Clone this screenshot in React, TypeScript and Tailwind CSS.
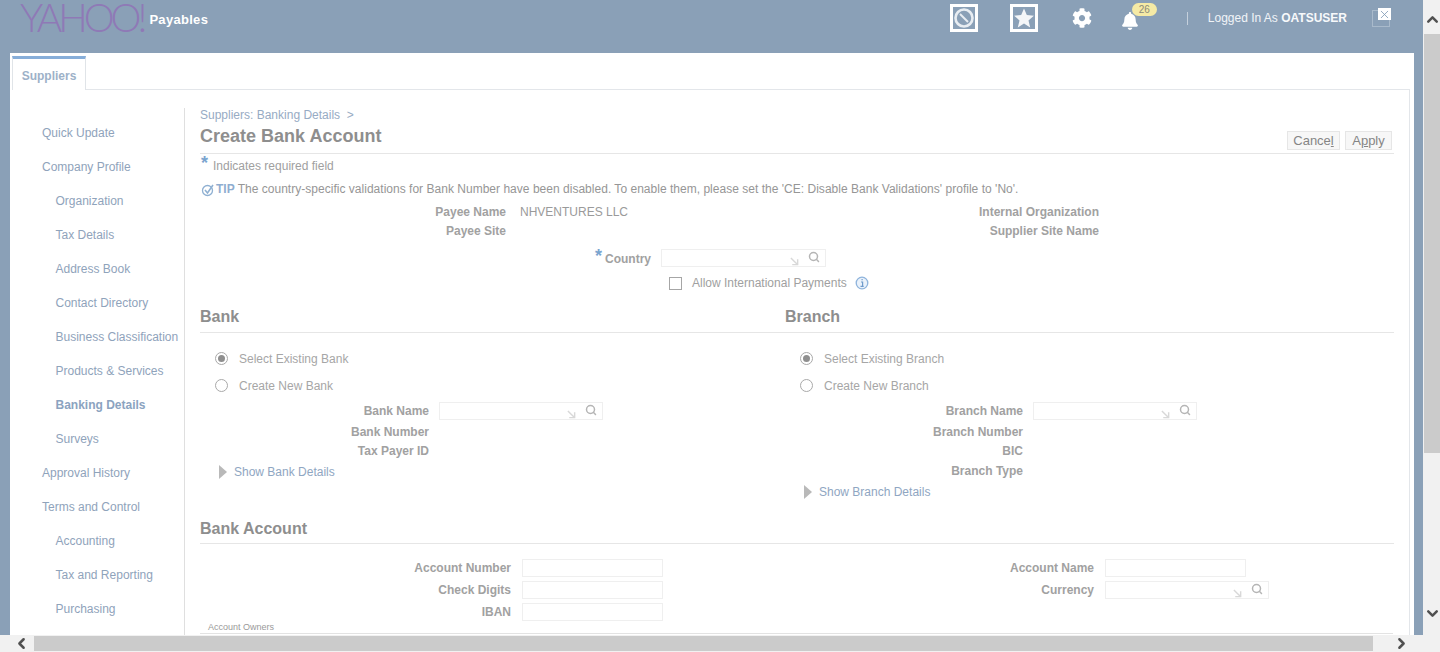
import React from 'react';
import { FaBell, FaCog } from 'react-icons/fa';
import { ChevronDown, ChevronLeft, ChevronRight, ChevronUp, Search, X } from 'lucide-react';

const navItems = [
  { label: 'Quick Update', sub: false },
  { label: 'Company Profile', sub: false },
  { label: 'Organization', sub: true },
  { label: 'Tax Details', sub: true },
  { label: 'Address Book', sub: true },
  { label: 'Contact Directory', sub: true },
  { label: 'Business Classification', sub: true },
  { label: 'Products & Services', sub: true },
  { label: 'Banking Details', sub: true, active: true },
  { label: 'Surveys', sub: true },
  { label: 'Approval History', sub: false },
  { label: 'Terms and Control', sub: false },
  { label: 'Accounting', sub: true },
  { label: 'Tax and Reporting', sub: true },
  { label: 'Purchasing', sub: true },
];

const Label = ({ children, className = '' }: { children: React.ReactNode; className?: string }) => (
  <span className={`block text-right font-bold text-[#a1a1a1] ${className}`}>{children}</span>
);

// lookup input with the little arrow + magnifier
const LovInput = ({ className = '' }: { className?: string }) => (
  <div className={`flex h-[18px] w-[164px] items-center justify-end border border-[#efefef] pr-[5px] ${className}`}>
    <svg width="9" height="9" viewBox="0 0 10 10" className="mt-[6px] mr-[9px]" fill="none" stroke="#d8d8d8" strokeWidth="1.6">
      <path d="M1 1l7 7M8.5 2.5v6h-6" />
    </svg>
    <Search size={12} strokeWidth={3} className="mb-[3px] text-[#b5b5b5]" />
  </div>
);

const TextInput = () => <div className="h-[18px] w-[141px] border border-[#efefef]" />;

const Radio = ({ checked, label }: { checked?: boolean; label: string }) => (
  <div className="flex h-[27px] items-center pl-[15px]">
    <span className="flex h-[13px] w-[13px] items-center justify-center rounded-full border border-[#a9a9a9]">
      {checked && <span className="h-[7px] w-[7px] rounded-full bg-[#8f8f8f]" />}
    </span>
    <span className="ml-[11px] text-[#a6a6a6]">{label}</span>
  </div>
);

const ShowDetails = ({ label }: { label: string }) => (
  <div className="flex h-[20px] items-center pl-[19px]">
    <span className="h-0 w-0 border-y-[7px] border-l-[8px] border-y-transparent border-l-[#b9b9b9]" />
    <span className="ml-[7px] text-[#8fa6c2]">{label}</span>
  </div>
);

const Compass = () => (
  <svg width="28" height="28" viewBox="0 0 28 28" fill="none">
    <rect x="1.5" y="1.5" width="25" height="25" stroke="#fff" strokeWidth="3" />
    <circle cx="14" cy="14" r="8.5" stroke="#e8edf2" strokeWidth="2.6" />
    <path d="M10 10l8 8" stroke="#e8edf2" strokeWidth="2" />
  </svg>
);

const StarBox = () => (
  <svg width="28" height="28" viewBox="0 0 28 28">
    <rect x="1.5" y="1.5" width="25" height="25" fill="none" stroke="#fff" strokeWidth="3" />
    <path d="M14 4.5l2.8 6.6 7.1.6-5.4 4.7 1.7 7-6.2-3.8-6.2 3.8 1.7-7-5.4-4.7 7.1-.6z" fill="#f4f6f8" />
  </svg>
);

export default function App() {
  return (
    <div className="flex h-[652px] w-[1440px] flex-col overflow-hidden bg-[#8aa0b7] font-['Liberation_Sans',Arial,sans-serif] text-[12px] leading-[14px]">
      <div className="flex min-h-0 flex-1">
        <div className="flex w-[1423px] shrink-0 flex-col">
          {/* top bar */}
          <header className="flex h-[53px] shrink-0 items-start">
            <span className="ml-[20px] font-['Lato','Liberation_Sans',sans-serif] text-[39px] leading-[34px] font-light tracking-[-4px] text-[#8f79b6]">
              YAHOO!
            </span>
            <span className="ml-[6px] mt-[12px] text-[13px] leading-[16px] font-bold tracking-[0.3px] text-white">Payables</span>
            <div className="ml-auto mr-[33px] mt-[4px] flex items-start">
              <Compass />
              <span className="ml-[32px]">
                <StarBox />
              </span>
              <FaCog size={20} className="ml-[34px] mt-[4px] text-white" />
              <div className="relative ml-[29px] mt-[6px] h-[22px] w-[18px]">
                <FaBell size={18} className="mt-[2px] text-white" />
                <span className="absolute left-[11px] top-[-7px] flex h-[13px] w-[25px] items-center justify-center rounded-full bg-[#f5eaa5] text-[10px] text-[#8b8b7a]">
                  26
                </span>
              </div>
              <span className="ml-[48px] mt-[8px] h-[13px] w-px bg-[#c5d0dc]" />
              <span className="ml-[20px] mt-[7px] text-[#f1f4f7]">
                Logged In As <b className="text-[#f7f9fb]">OATSUSER</b>
              </span>
              <div className="relative ml-[25px] mt-[6px] h-[17px] w-[18px] border border-[#a9bacb]">
                <span className="absolute left-[5px] top-[-3px] flex h-[12px] w-[13px] items-center justify-center bg-white text-[#7f9ab5]">
                  <X size={13} strokeWidth={1.5} />
                </span>
              </div>
            </div>
          </header>

          {/* white page */}
          <main className="ml-[10px] mr-[9px] flex min-h-0 flex-1 flex-col overflow-hidden bg-white pl-[2px] pr-[4px]">
            <div className="flex h-[37px] shrink-0 items-end">
              <div className="flex h-[34px] w-[74px] items-center justify-center border-x border-t-[3px] border-x-[#e0e4e8] border-t-[#87aed9] pt-[2px] font-bold text-[#9db1c8]">
                Suppliers
              </div>
              <div className="flex-1 border-b border-[#e3e6ea]" />
            </div>

            <div className="flex min-h-0 flex-1 border-r border-[#e3e6ea] pt-[18px]">
              {/* side nav */}
              <nav className="h-full w-[173px] shrink-0 border-r border-[#dfdfdf] pt-[8px]">
                {navItems.map((item) => (
                  <div
                    key={item.label}
                    className={`flex h-[34px] items-center whitespace-nowrap ${item.sub ? 'pl-[43.5px]' : 'pl-[30px]'} ${
                      item.active ? 'font-bold text-[#8ba3c0]' : 'text-[#8fa3bb]'
                    }`}
                  >
                    {item.label}
                  </div>
                ))}
              </nav>

              {/* form */}
              <section className="ml-[15px] w-[1194px] shrink-0">
                <div className="text-[#97abc4]">Suppliers: Banking Details&nbsp; &gt;</div>
                <div className="mt-[3px] flex h-[29px] items-start justify-between border-b border-[#e6e6e6]">
                  <h1 className="mt-[1px] text-[18px] leading-[20px] font-bold text-[#8e8e8e]">Create Bank Account</h1>
                  <div className="mr-[2px] mt-[6px] flex gap-[5px]">
                    <button className="h-[19px] w-[53px] border border-[#e6e6e6] bg-[#f7f7f7] text-[13px] text-[#858585]">
                      Cance<u>l</u>
                    </button>
                    <button className="h-[19px] w-[47px] border border-[#e6e6e6] bg-[#f7f7f7] text-[13px] text-[#858585]">
                      A<u>p</u>ply
                    </button>
                  </div>
                </div>

                <div className="mt-[2px] flex h-[20px] items-center">
                  <span className="mb-[6px] ml-[1px] w-[12px] text-[18px] font-bold text-[#7aa4cf]">*</span>
                  <span className="text-[#a0a0a0]">Indicates required field</span>
                </div>

                <div className="mt-[3px] flex h-[20px] items-center">
                  <svg width="14" height="14" viewBox="0 0 14 14" fill="none" stroke="#8fb0d2" strokeWidth="1.3" className="ml-[1px] mt-[2px]">
                    <circle cx="6.5" cy="7.5" r="5" />
                    <path d="M4 7l2.5 3L12 2" strokeWidth="1.6" />
                  </svg>
                  <span className="ml-[1px] font-bold text-[#8fadd0]">TIP</span>
                  <span className="ml-[3px] whitespace-nowrap tracking-[0.02px] text-[#969696]">
                    The country-specific validations for Bank Number have been disabled. To enable them, please set the 'CE: Disable Bank Validations' profile to 'No'.
                  </span>
                </div>

                <div className="mt-[3px] grid grid-cols-[306px_473px_120px] grid-rows-[19px_19px] items-center">
                  <Label>Payee Name</Label>
                  <span className="pl-[14px] text-[#9a9a9a]">NHVENTURES LLC</span>
                  <Label>Internal Organization</Label>
                  <Label>Payee Site</Label>
                  <span />
                  <Label>Supplier Site Name</Label>
                </div>

                <div className="mt-[9px] flex h-[18px] items-center pl-[395px]">
                  <span className="mb-[5px] text-[18px] font-bold text-[#7aa4cf]">*</span>
                  <Label className="ml-[3px] mt-[1px]">Country</Label>
                  <LovInput className="ml-[10px] w-[165px]" />
                </div>

                <div className="mt-[7px] flex h-[18px] items-center pl-[469px]">
                  <span className="h-[13px] w-[13px] border border-[#a6a6a6]" />
                  <span className="ml-[10px] text-[#a0a0a0]">Allow International Payments</span>
                  <svg width="14" height="14" viewBox="0 0 14 14" className="ml-[8px]">
                    <circle cx="7" cy="7" r="5.8" fill="#eaf2fb" stroke="#8fb4dc" strokeWidth="1.3" />
                    <path d="M6 6h1.6v4.2M5.5 10.4h3.2M6.5 3.6h1.2" fill="none" stroke="#6f9bcb" strokeWidth="1.2" />
                  </svg>
                </div>

                {/* Bank / Branch */}
                <div className="mt-[15px] flex h-[26px] items-start border-b border-[#e6e6e6] text-[16px] leading-[20px] font-bold text-[#8e8e8e]">
                  <h2 className="w-[585px]">Bank</h2>
                  <h2>Branch</h2>
                </div>

                <div className="mt-[12px] flex">
                  <div className="w-[585px]">
                    <Radio checked label="Select Existing Bank" />
                    <Radio label="Create New Bank" />
                    <div className="mt-[3px] flex h-[18px] items-center">
                      <Label className="w-[229px]">Bank Name</Label>
                      <LovInput className="ml-[10px]" />
                    </div>
                    <Label className="mt-[5px] h-[16px] w-[229px]">Bank Number</Label>
                    <Label className="mt-[3px] h-[16px] w-[229px]">Tax Payer ID</Label>
                    <div className="mt-[2px]">
                      <ShowDetails label="Show Bank Details" />
                    </div>
                  </div>
                  <div>
                    <Radio checked label="Select Existing Branch" />
                    <Radio label="Create New Branch" />
                    <div className="mt-[3px] flex h-[18px] items-center">
                      <Label className="w-[238px]">Branch Name</Label>
                      <LovInput className="ml-[10px]" />
                    </div>
                    <Label className="mt-[5px] h-[16px] w-[238px]">Branch Number</Label>
                    <Label className="mt-[3px] h-[16px] w-[238px]">BIC</Label>
                    <Label className="mt-[4px] h-[16px] w-[238px]">Branch Type</Label>
                    <div className="mt-[2px]">
                      <ShowDetails label="Show Branch Details" />
                    </div>
                  </div>
                </div>

                {/* Bank Account */}
                <div className="mt-[9px] h-[33px] border-b border-[#e6e6e6] pt-[8px] text-[16px] leading-[20px] font-bold text-[#8e8e8e]">
                  Bank Account
                </div>

                <div className="mt-[15px] grid grid-cols-[311px_152px_431px_auto] grid-rows-[18px_18px_18px] items-center gap-y-[4px]">
                  <Label>Account Number</Label>
                  <div className="pl-[11px]">
                    <TextInput />
                  </div>
                  <Label>Account Name</Label>
                  <div className="pl-[11px]">
                    <TextInput />
                  </div>
                  <Label>Check Digits</Label>
                  <div className="pl-[11px]">
                    <TextInput />
                  </div>
                  <Label>Currency</Label>
                  <div className="pl-[11px]">
                    <LovInput />
                  </div>
                  <Label>IBAN</Label>
                  <div className="pl-[11px]">
                    <TextInput />
                  </div>
                </div>

                <div className="ml-[8px] mt-[1px] text-[9px] leading-[10px] text-[#9a9a9a]">Account Owners</div>
                <div className="mt-[1px] h-[3px] w-[1193px] border-t border-[#e3e3e3]" />
              </section>
            </div>
          </main>
        </div>

        {/* vertical scrollbar */}
        <div className="flex flex-1 flex-col bg-[#f1f1f1] pl-px">
          <div className="flex h-[34px] items-center justify-center pt-[5px]">
            <ChevronUp size={17} strokeWidth={3.5} className="text-[#505050]" />
          </div>
          <div className="h-[419px] bg-[#cbcbcb]" />
          <div className="mt-auto flex h-[30px] items-start justify-center">
            <ChevronDown size={17} strokeWidth={3.5} className="text-[#505050]" />
          </div>
        </div>
      </div>

      {/* horizontal scrollbar */}
      <div className="flex h-[17px] shrink-0 items-center bg-[#f1f1f1]">
        <div className="flex w-[34px] justify-center pl-[8px]">
          <ChevronLeft size={17} strokeWidth={3.5} className="text-[#505050]" />
        </div>
        <div className="h-[15px] w-[1339px] bg-[#cbcbcb]" />
        <div className="ml-[20px]">
          <ChevronRight size={17} strokeWidth={3.5} className="text-[#505050]" />
        </div>
      </div>
    </div>
  );
}
